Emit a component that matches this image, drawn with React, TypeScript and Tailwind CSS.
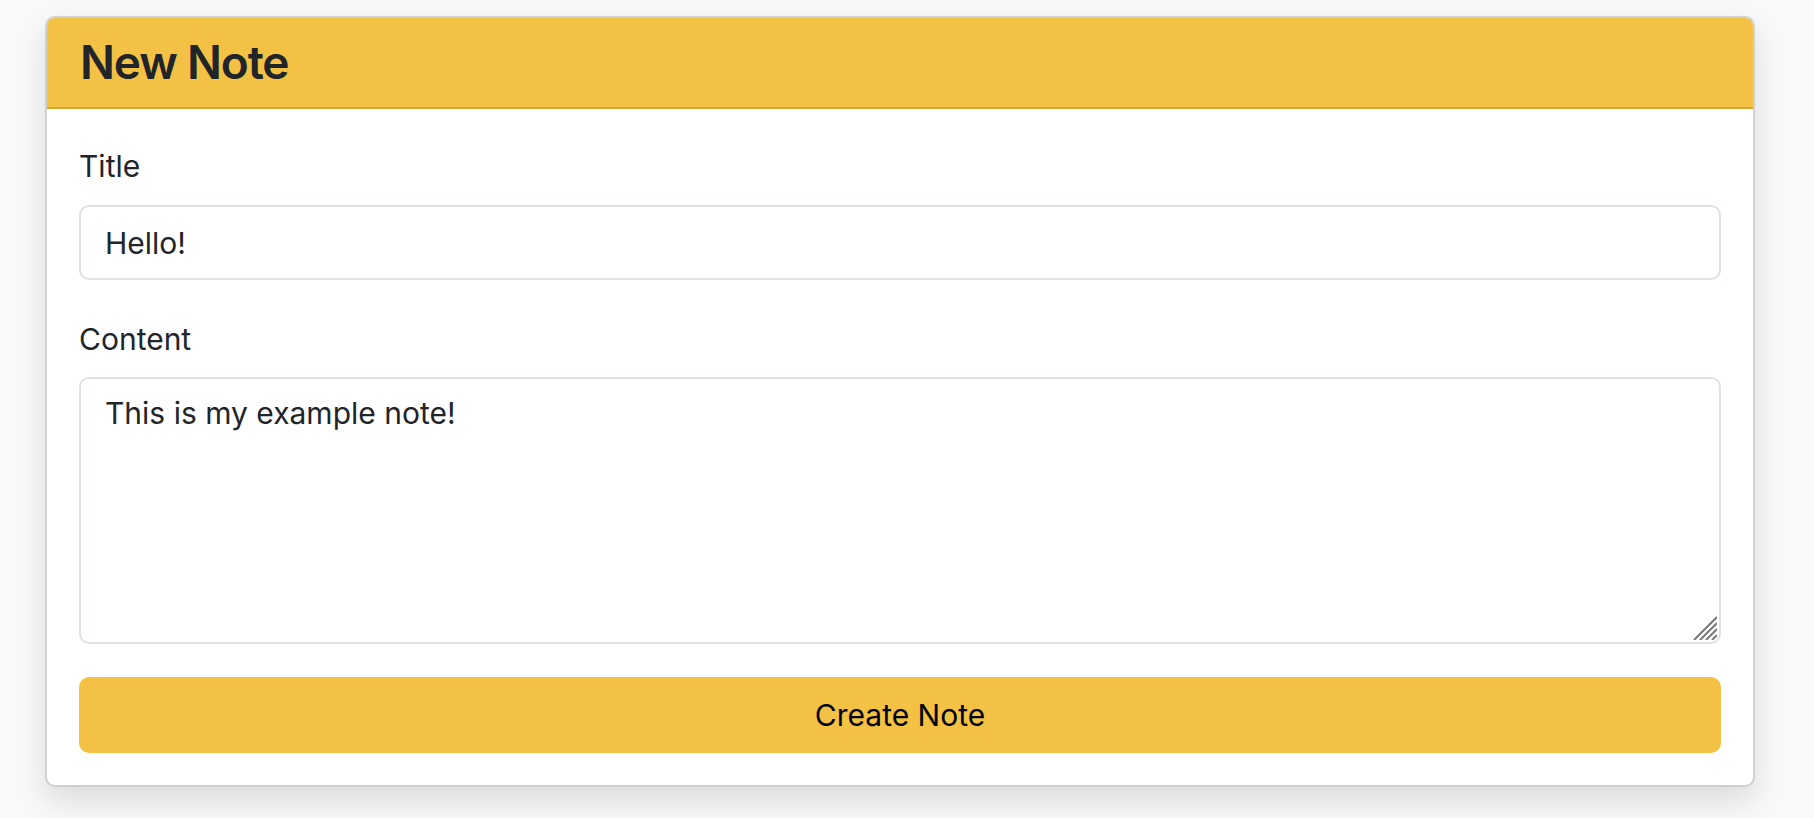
import { useState } from "react";

const font = { fontFamily: "Inter, 'Noto Sans', sans-serif" };

// mac-style resize grip, drawn over the textarea corner
const ResizeGrip = () => (
  <svg
    width="24"
    height="24"
    viewBox="0 0 24 24"
    className="pointer-events-none absolute right-[4px] bottom-[4px]"
  >
    <g stroke="#777" strokeWidth="2" strokeLinecap="butt">
      <line x1="24" y1="1" x2="1" y2="24" />
      <line x1="24" y1="7" x2="7" y2="24" />
      <line x1="24" y1="13" x2="13" y2="24" />
      <line x1="24" y1="19" x2="19" y2="24" />
    </g>
  </svg>
);

const App = () => {
  const [title, setTitle] = useState("Hello!");
  const [content, setContent] = useState("This is my example note!");

  return (
    <div
      className="min-h-screen w-full bg-[#f8f9fa] pl-[45px] pr-[59px] pt-[16px]"
      style={font}
    >
      <div className="overflow-hidden rounded-[10px] border-2 border-[#d0d0d0] bg-white shadow-[0_14px_30px_rgba(0,0,0,0.12)]">
        <div className="flex h-[91px] items-center border-b-2 border-[#d3a62e] bg-[#f3c244] px-[33px]">
          <h3 className="text-[46px] font-semibold leading-[1.2] tracking-tight text-[#212529]">
            New Note
          </h3>
        </div>
        <div className="flex flex-col px-[32px] pt-[35px] pb-[32px] text-[30px] leading-[45px] text-[#212529]">
          <label className="mb-[16px]">Title</label>
          <input
            type="text"
            value={title}
            onChange={(e) => setTitle(e.target.value)}
            className="h-[75px] rounded-[10px] border-2 border-[#dee2e6] px-[24px] outline-none"
          />
          <label className="mt-[37px] mb-[15px]">Content</label>
          <div className="relative flex">
            <textarea
              value={content}
              onChange={(e) => setContent(e.target.value)}
              className="h-[267px] w-full resize-none rounded-[10px] border-2 border-[#dee2e6] px-[24px] pt-[12px] outline-none"
            />
            <ResizeGrip />
          </div>
          <button
            type="button"
            className="mt-[33px] h-[76px] rounded-[10px] bg-[#f3c244] text-[30px] text-black"
          >
            Create Note
          </button>
        </div>
      </div>
    </div>
  );
};

export default App;
